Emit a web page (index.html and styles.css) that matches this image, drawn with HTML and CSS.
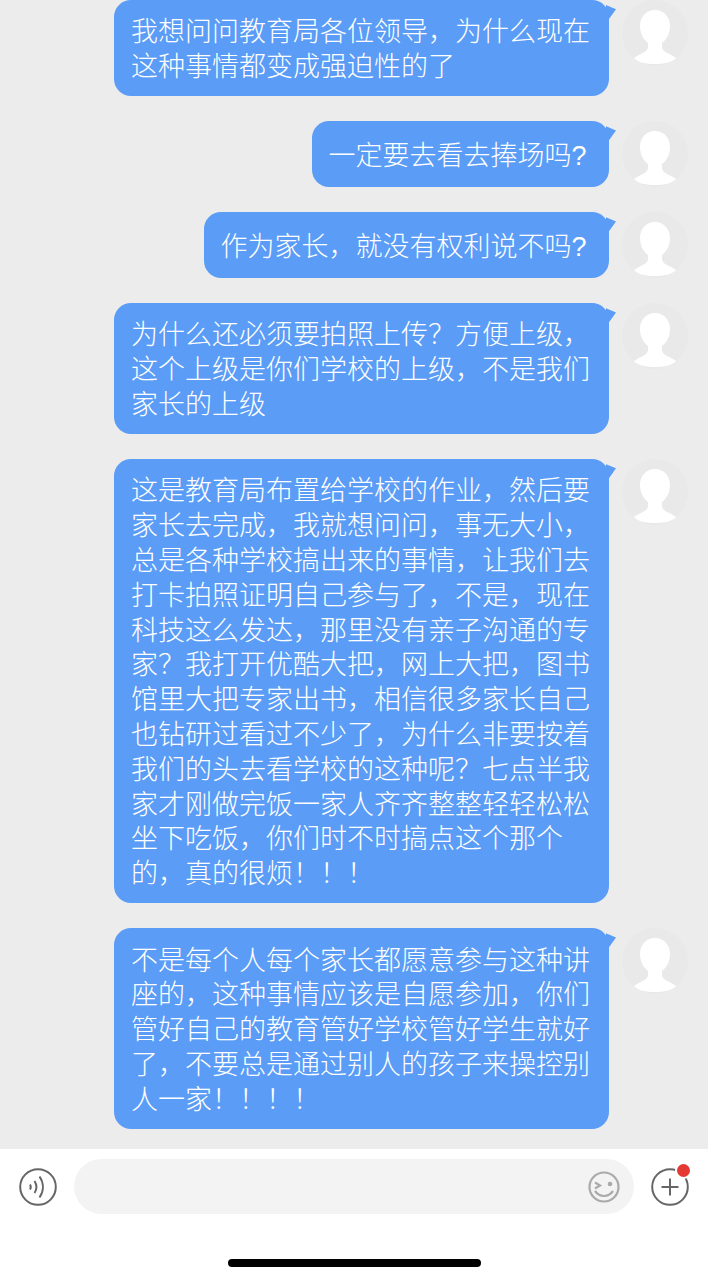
FILE: index.html
```html
<!DOCTYPE html>
<html lang="zh-CN">
<head>
    <meta charset="UTF-8">
    <meta name="viewport" content="width=device-width, initial-scale=1.0">
    <title>聊天</title>
    <link rel="stylesheet" href="styles.css">
</head>
<body>

    <svg class="defs" width="0" height="0" aria-hidden="true">
        <symbol id="person" viewBox="0 0 66 66">
            <path d="M33 10c-9 0-15 7-15 16 0 7 3 13 8 17v4c0 3-3 5-7 7-3 1-6 3-8 5 4 3 14 5 22 5s18-2 22-5c-2-2-5-4-8-5-4-2-7-4-7-7v-4c5-4 8-10 8-17 0-9-6-16-15-16z"/>
        </symbol>
    </svg>

    <main class="chat">
        <div class="msg">
            <div class="bubble">我想问问教育局各位领导，为什么现在这种事情都变成强迫性的了</div>
            <svg class="avatar"><use href="#person"/></svg>
        </div>
        <div class="msg">
            <div class="bubble short">一定要去看去捧场吗<span class="qm">?</span></div>
            <svg class="avatar"><use href="#person"/></svg>
        </div>
        <div class="msg">
            <div class="bubble short">作为家长，就没有权利说不吗<span class="qm">?</span></div>
            <svg class="avatar"><use href="#person"/></svg>
        </div>
        <div class="msg">
            <div class="bubble">为什么还必须要拍照上传？方便上级，这个上级是你们学校的上级，不是我们家长的上级</div>
            <svg class="avatar"><use href="#person"/></svg>
        </div>
        <div class="msg">
            <div class="bubble">这是教育局布置给学校的作业，然后要家长去完成，我就想问问，事无大小，总是各种学校搞出来的事情，让我们去打卡拍照证明自己参与了，不是，现在科技这么发达，那里没有亲子沟通的专家？我打开优酷大把，网上大把，图书馆里大把专家出书，相信很多家长自己也钻研过看过不少了，为什么非要按着我们的头去看学校的这种呢？七点半我家才刚做完饭一家人齐齐整整轻轻松松坐下吃饭，你们时不时搞点这个那个的，真的很烦！！！</div>
            <svg class="avatar"><use href="#person"/></svg>
        </div>
        <div class="msg">
            <div class="bubble">不是每个人每个家长都愿意参与这种讲座的，这种事情应该是自愿参加，你们管好自己的教育管好学校管好学生就好了，不要总是通过别人的孩子来操控别人一家！！！！</div>
            <svg class="avatar"><use href="#person"/></svg>
        </div>
    </main>

    <footer class="footer">
        <div class="input-row">
            <svg class="round-icon" viewBox="0 0 38 38">
                <circle cx="19" cy="19" r="17.8" class="ring"/>
                <path d="M11 16.500c1 1.600 1 3.400 0 5" class="ring"/>
                <path d="M15.500 13c2.600 4 2.600 8 0 12" class="ring"/>
                <path d="M20.500 8.500c4.500 6.500 4.500 14.500 0 21" class="ring"/>
            </svg>
            <div class="input-box">
                <svg class="smiley" viewBox="0 0 32 32">
                    <circle cx="16" cy="16" r="14.500"/>
                    <path d="M7 11.500l5 3-5 3"/>
                    <circle cx="22" cy="13" r="2.300" class="eye"/>
                    <path d="M7 20c2.500 3.500 5.500 5 9 5s6.500-1.500 9-5"/>
                </svg>
            </div>
            <div class="plus">
                <svg class="round-icon" viewBox="0 0 38 38">
                    <circle cx="19" cy="19" r="17.8" class="ring"/>
                    <path d="M10.500 19h17M19 10.500v17" class="ring"/>
                </svg>
                <span class="dot"></span>
            </div>
        </div>
        <div class="home-bar"></div>
    </footer>

</body>
</html>
```

FILE: styles.css
```css
* {
    box-sizing: border-box;
}

html, body {
    margin: 0;
    padding: 0;
}

body {
    width: 708px;
    height: 1280px;
    display: flex;
    flex-direction: column;
    overflow: hidden;
    background-color: #ececec;
    font-family: "Liberation Sans", "Noto Sans CJK SC", sans-serif;
}

.defs {
    position: absolute;
}

.chat {
    height: 1149px;
    display: flex;
    flex-direction: column;
    gap: 25px;
    overflow: hidden;
}

.msg {
    display: flex;
    justify-content: flex-end;
    align-items: flex-start;
    gap: 13px;
    padding-right: 20px;
}

.bubble {
    position: relative;
    max-width: 495px;
    min-height: 66px;
    padding: 15.3px 17px 11.3px;
    background-color: #5a9cf6;
    border-radius: 17px;
    color: #fff;
    font-size: 27px;
    font-weight: 300;
    line-height: 34.8px;
}

.bubble.short {
    padding-top: 17.6px;
    padding-bottom: 13.6px;
}

/* little tail at the top right of each bubble */
.bubble::after {
    content: "";
    position: absolute;
    top: 5px;
    right: -7px;
    width: 10px;
    height: 14px;
    background-color: #5a9cf6;
    clip-path: polygon(0 0, 100% 30%, 30% 100%, 0 100%);
}

.qm {
    display: inline-block;
    width: 20.5px;
}

.avatar {
    flex: none;
    width: 66px;
    height: 66px;
    border-radius: 50%;
    background-color: #e9e9e9;
    fill: #fff;
}

.footer {
    flex: 1;
    padding-top: 10px;
    background-color: #fff;
}

.input-row {
    display: flex;
    align-items: center;
    gap: 17px;
    padding-left: 19px;
}

.round-icon {
    display: block;
    width: 38px;
    height: 38px;
    fill: none;
}

.ring {
    fill: none;
    stroke: #666;
    stroke-width: 2;
}

.input-box {
    width: 560px;
    height: 55px;
    padding-right: 14px;
    display: flex;
    justify-content: flex-end;
    align-items: center;
    background-color: #f3f3f3;
    border-radius: 28px;
}

.smiley {
    width: 32px;
    height: 32px;
    fill: none;
    stroke: #aaa;
    stroke-width: 2.2;
}

.smiley .eye {
    fill: #aaa;
    stroke: none;
}

.plus {
    position: relative;
}

.dot {
    position: absolute;
    top: -6px;
    right: -3px;
    width: 17px;
    height: 17px;
    border: 2px solid #fff;
    border-radius: 50%;
    background-color: #e53935;
}

.home-bar {
    width: 253px;
    height: 8px;
    margin: 45px 0 0 228px;
    border-radius: 4px;
    background-color: #000;
}
```
